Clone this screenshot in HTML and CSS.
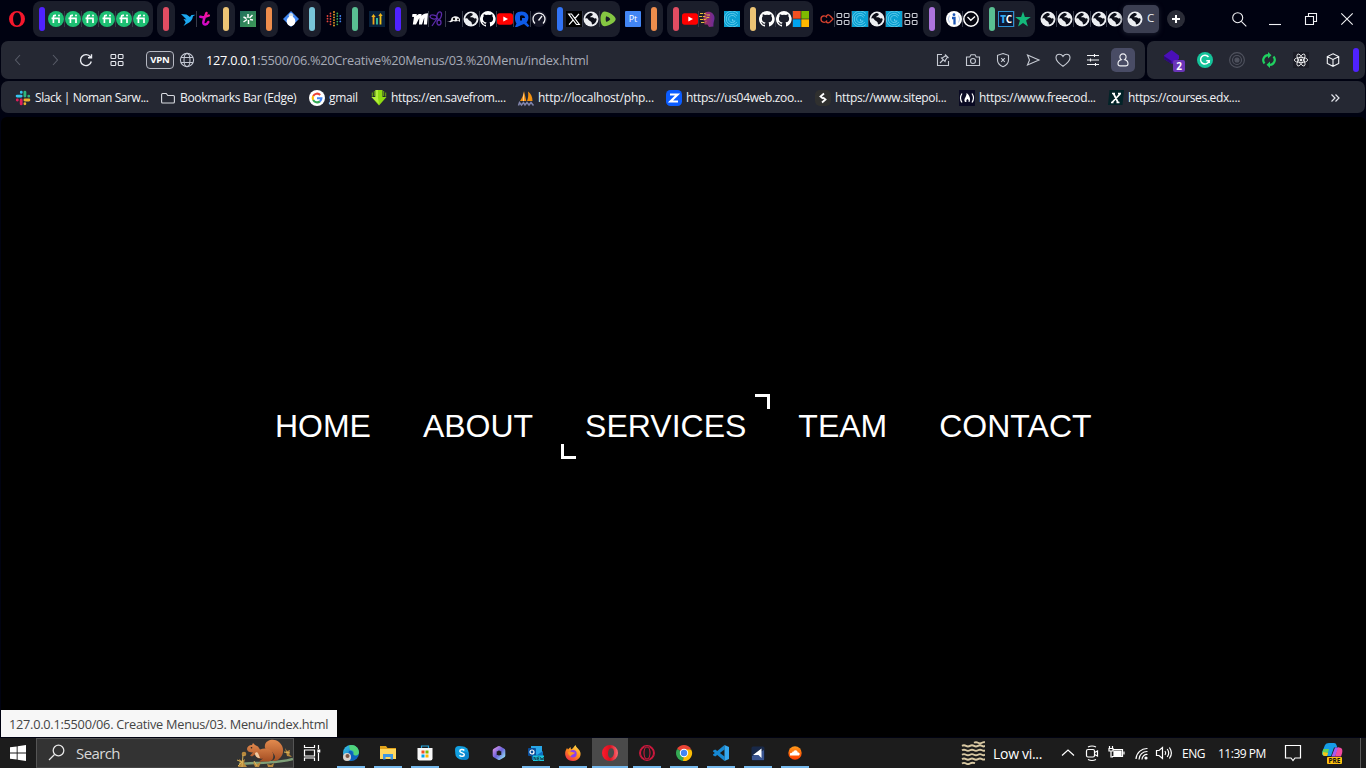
FILE: index.html
```html
<!DOCTYPE html>
<html lang="en">
<head>
<meta charset="utf-8">
<title>Creative Menu</title>
<link rel="stylesheet" href="styles.css">
</head>
<body>
<svg class="defs" width="0" height="0">
  <defs>
    <linearGradient id="gBlue" x1="0" y1="0" x2="1" y2="1"><stop offset="0" stop-color="#36c6e8"/><stop offset="1" stop-color="#0b57b8"/></linearGradient>
    <linearGradient id="gPink" x1="1" y1="0" x2="0" y2="1"><stop offset="0" stop-color="#ff1a8c"/><stop offset="1" stop-color="#c000e0"/></linearGradient>
    <linearGradient id="gFox" x1="0.8" y1="0" x2="0.2" y2="1"><stop offset="0" stop-color="#ffe14a"/><stop offset=".5" stop-color="#ff8a1e"/><stop offset="1" stop-color="#f0284a"/></linearGradient>
    <linearGradient id="gM" x1="0" y1="0" x2="1" y2="1"><stop offset="0" stop-color="#c88be8"/><stop offset=".5" stop-color="#6a62d8"/><stop offset="1" stop-color="#8fd4f4"/></linearGradient>
    <linearGradient id="gSc" x1="0" y1="0" x2="0" y2="1"><stop offset="0" stop-color="#ff9a1a"/><stop offset="1" stop-color="#ff3d00"/></linearGradient>
    <linearGradient id="gSq" x1="0" y1="0" x2="0" y2="1"><stop offset="0" stop-color="#e28a4e"/><stop offset="1" stop-color="#a34d22"/></linearGradient>
    <linearGradient id="gHead" x1="0" y1="0" x2="1" y2="0"><stop offset="0" stop-color="#a8325a"/><stop offset="1" stop-color="#6a2a9a"/></linearGradient>
    <linearGradient id="gSpark" x1="0" y1="0" x2="1" y2="1"><stop offset="0" stop-color="#1f6f5c"/><stop offset="1" stop-color="#3f9a58"/></linearGradient>
    <linearGradient id="gOp" x1="0" y1="0" x2="1" y2="0"><stop offset="0" stop-color="#ff1b2d"/><stop offset=".5" stop-color="#d8101f"/><stop offset="1" stop-color="#ff6a72"/></linearGradient>
    <symbol id="opera" viewBox="0 0 16 16"><path fill="#f5172c" fill-rule="evenodd" d="M8 0a8 8 0 1 0 0 16A8 8 0 0 0 8 0zM8 1.500c2.400 0 3.900 2.900 3.900 6.500S10.400 14.500 8 14.500 4.100 11.600 4.100 8 5.600 1.500 8 1.500z"/></symbol>
    <symbol id="fi" viewBox="0 0 16 16"><circle cx="8" cy="8" r="8" fill="#1dbf73"/><path d="M8 4.300H7c-1.200 0-1.600.600-1.600 1.600V12M3.500 7.300h7.500V12" fill="none" stroke="#fff" stroke-width="1.700"/><circle cx="11" cy="4.500" r="1" fill="#fff"/></symbol>
    <symbol id="bird" viewBox="0 0 16 16"><path fill="#1ca8f0" d="M1 3l5.500.4L10 6l1.500-2 4-.3L13 5.300c-.7 4-2.700 6-6 7.500L3.500 15l2.200-3.700L3.500 8l3 .4z"/></symbol>
    <symbol id="tee" viewBox="0 0 16 16"><path d="M9.500 2C8 5.500 6.300 9 6.300 11.500c0 3 3.700 2.300 5-.5M3.300 5.800C6 6.500 9 6 11.800 4.500" fill="none" stroke="url(#gPink)" stroke-width="2.500" stroke-linecap="round"/></symbol>
    <symbol id="spark" viewBox="0 0 16 16"><path fill="url(#gSpark)" d="M0 0h16v16H0z"/><path d="M8 3v4M3.500 6l3 1.500M3.500 11L7 8.500M8.500 9v4M9.500 7l3-3M10 8.500l3 .5" stroke="#fff" stroke-width="1.500"/></symbol>
    <symbol id="diamond" viewBox="0 0 16 16"><path fill="#3f86f2" d="M8 0l8 8-8 8-8-8z"/><ellipse cx="8" cy="10.300" rx="4.300" ry="4.900" fill="#fff"/><circle cx="8" cy="4.500" r="2.200" fill="#fff"/><path d="M5.500 4h5" stroke="#8ab" stroke-width=".8"/></symbol>
    <symbol id="dots" viewBox="0 0 16 16"><g fill="none" stroke-width="1.800" stroke-linecap="round" stroke-dasharray="0 2.700"><path stroke="#e8453c" d="M1.500 5v8M4.500 2.500v12"/><path stroke="#f5a623" d="M8 1v15"/><path stroke="#34a853" d="M11.300 2.500v12"/><path stroke="#4285f4" d="M14.300 5v8"/></g></symbol>
    <symbol id="arrows" viewBox="0 0 16 16"><path fill="#08213c" d="M0 0h16v16H0z"/><path d="M4.500 5v8.500" stroke="#f0a31a" stroke-width="1.800"/><path d="M8 7v6.500" stroke="#37c6a4" stroke-width="1.800"/><path d="M11.500 4v9.500" stroke="#f0c21a" stroke-width="1.800"/><path fill="#f0b41a" d="M2.300 6l2.200-3 2.200 3zM9.300 5l2.200-3 2.200 3z"/></symbol>
    <symbol id="em" viewBox="0 0 16 16"><path fill="#fff" d="M.5 3h4.300l-.2 1.700C5.500 3.500 6.500 3 8 3h1.500v1.700C10.800 3.300 12.500 2.300 16 2.300L15 13.500h-3.200l.5-7L10 13.500H7L7.300 7 4 13.500H.8L2 6 0 5.800z"/></symbol>
    <symbol id="fly" viewBox="0 0 16 16"><g fill="none" stroke="#5a2aa8" stroke-width="1.300"><ellipse cx="10.300" cy="4.500" rx="2.200" ry="3.800" transform="rotate(15 10 4)"/><ellipse cx="4.500" cy="6" rx="3.500" ry="1.900" transform="rotate(12 4.500 6)"/><ellipse cx="10" cy="11.500" rx="2" ry="2.500"/><path d="M8 7.500l-5 7.500"/></g></symbol>
    <symbol id="masks" viewBox="0 0 16 16"><path d="M1 10c3 1 4 0 4.500-3C8 4 13 5 14 8v3c-2-2.500-4 .5-6.500-1-2 1.500-4.500 1.500-6.500 0z" fill="#f2f2f2"/><circle cx="8" cy="8" r="1.200" fill="#111"/><circle cx="12" cy="8.500" r="1" fill="#111"/></symbol>
    <symbol id="globe" viewBox="0 0 16 16"><circle cx="8" cy="8" r="7.500" fill="#eceef2"/><path fill="#0b0d18" d="M6.500 2.200c1.800-.7 3.500.2 3.200 1.500S7 4.800 7.200 6.300c1.800-.3 4 .2 4.200 1.400.8-.6 1.800-.4 2.300.2-.2 3-2.200 4.900-4.600 5.700-.5-1-.1-2.200-1.100-2.900S5.300 9 4.500 7.500c-.8-.4-1.600-.2-2.200.2.100-2.400 1.800-4.600 4.200-5.500z"/></symbol>
    <symbol id="github" viewBox="0 0 16 16"><path fill="#fff" d="M8 0a8 8 0 0 0-2.530 15.590c.4.070.550-.170.550-.380v-1.490c-2.220.480-2.690-1.070-2.690-1.070-.360-.920-.890-1.170-.890-1.170-.730-.500.050-.490.050-.490.800.060 1.230.830 1.230.830.710 1.220 1.870.870 2.330.660.070-.520.280-.870.510-1.070-1.780-.200-3.640-.890-3.640-3.950 0-.870.310-1.590.820-2.150-.080-.200-.360-1.020.080-2.120 0 0 .670-.210 2.200.820a7.600 7.600 0 0 1 4 0c1.530-1.040 2.200-.820 2.200-.820.440 1.100.160 1.920.080 2.120.510.560.820 1.270.820 2.150 0 3.070-1.870 3.750-3.650 3.950.290.250.540.730.540 1.480v2.190c0 .210.150.460.550.380A8 8 0 0 0 8 0z"/></symbol>
    <symbol id="youtube" viewBox="0 0 16 16"><rect y="2.300" width="16" height="11.400" rx="2.600" fill="#f00"/><path fill="#fff" d="M6.300 5.500v5L11 8z"/></symbol>
    <symbol id="bluep" viewBox="0 0 16 16"><path fill="#0e5be8" fill-rule="evenodd" d="M2 2.500C4-.3 12-.8 14 4c1 3 0 5.500-1.500 7.500L15.500 15l-2 1-3.500-3-2.500 1L3 16H1l1.500-3.500C.5 10 .5 5 2 2.500zM6 5v4.500h4.500l.5-3C10.500 4 7 3.500 6 5z"/><path fill="#0e5be8" d="M8 7h3v3H8z"/></symbol>
    <symbol id="gauge" viewBox="0 0 16 16"><circle cx="8" cy="8" r="8" fill="#141526"/><path d="M4 12.500A6 6 0 1 1 12 12.500M7.500 9.500L11 5" fill="none" stroke="#f2f2f5" stroke-width="1.300"/></symbol>
    <symbol id="ex" viewBox="0 0 16 16"><path d="M0 0h16v16H0z"/><path d="M2.700 3h2.800l7.800 10.500h-2.800zM13 2.800L8.900 7.500M7 9.200l-3.900 4.500" fill="none" stroke="#fff" stroke-width="1.200"/></symbol>
    <symbol id="rumble" viewBox="0 0 16 16"><path fill="#85c742" d="M4.500.6C8 .4 15.500 4.800 15.700 8S8 15.500 4.500 15.300C1.500 15 .5 11 .5 8S1.500.9 4.500.6z"/><path fill="#1b1e2b" d="M6.200 5.200c1.300.3 3.800 1.700 4 2.800s-2.500 2.600-4 2.800c-.7-1.700-.7-3.900 0-5.600z"/></symbol>
    <symbol id="head" viewBox="0 0 16 16"><path fill="url(#gHead)" d="M6 1.500c5-2 9.500 1 9.500 5.500 0 3-1.500 4.500-1 8.500L10 16l-1.500-2.500H5.500V10L4 9z"/><path d="M1 2.500h5l2 1.500h3M0 5.500h6l1.500 1H11M1 8.500h5l2-1M2 11.500h4l1-1" stroke="#e8b93a" stroke-width="1" stroke-dasharray="3 .8" fill="none"/></symbol>
    <symbol id="cee" viewBox="0 0 16 16"><path fill="#0aa0d2" d="M0 0h16v16H0z"/><path d="M14 2.500a8 8 0 1 0 0 11M12.800 5a5.700 5.700 0 1 0 0 6M11.500 6.500a3.600 3.600 0 1 0-.3 3.500H8.500V8" fill="none" stroke="#6fd2f0" stroke-width=".8"/></symbol>
    <symbol id="ms" viewBox="0 0 16 16"><path fill="#f25022" d="M0 0h7.700v7.700H0z"/><path fill="#7fba00" d="M8.300 0H16v7.700H8.300z"/><path fill="#00a4ef" d="M0 8.300h7.700V16H0z"/><path fill="#ffb900" d="M8.300 8.300H16V16H8.300z"/></symbol>
    <symbol id="chain" viewBox="0 0 16 16"><path d="M9 9.500c-2 3-6 2-6-1.500S7 4 9 6.500M8 5.500c2-2.500 3-2 4.500-.3L15 8l-3 3c-1.500 1.300-2.500 1.300-4-.5" fill="none" stroke="#d8432f" stroke-width="1.300"/></symbol>
    <symbol id="grid" viewBox="0 0 16 16"><g fill="none" stroke="currentColor" stroke-width="1.100"><rect x="2" y="2.500" width="4.700" height="4" rx=".8"/><rect x="9.300" y="2.500" width="4.700" height="4" rx=".8"/><rect x="2" y="9.500" width="4.700" height="4" rx=".8"/><rect x="9.300" y="9.500" width="4.700" height="4" rx=".8"/></g></symbol>
    <symbol id="info" viewBox="0 0 16 16"><circle cx="8" cy="8" r="8" fill="#fff"/><circle cx="8" cy="3.700" r="1.400" fill="#1d56b5"/><path d="M6 7h2.500v6.500" stroke="#1d56b5" stroke-width="2.300" fill="none"/><path d="M3.500 4.500a6 6 0 0 0 0 7M12.500 4.500a6 6 0 0 1 0 7" fill="none" stroke="#b5c9ea"/></symbol>
    <symbol id="clock" viewBox="0 0 16 16"><circle cx="8" cy="8" r="7.200" fill="#050610" stroke="#fff" stroke-width="1.500"/><path d="M4.500 6l3.300 3.300L12 5.500" fill="none" stroke="#fff" stroke-width="1.300"/></symbol>
    <symbol id="star" viewBox="0 0 16 16"><path fill="#14b87a" d="M8 .5l1.900 5.600h5.900l-4.700 3.500 1.800 5.800L8 12l-4.900 3.400 1.800-5.800L.2 6.100h5.900z"/></symbol>
    <symbol id="wire" viewBox="0 0 16 16"><g fill="none" stroke="#c3c7d2" stroke-width="1.100"><circle cx="8" cy="8" r="6.600"/><ellipse cx="8" cy="8" rx="3" ry="6.600"/><path d="M2 5.500h12M2 10.500h12"/></g></symbol>
  </defs>
</svg>

<div class="browser">
  <header class="tabs">
    <svg class="ic logo"><use href="#opera"/></svg>
    <div class="group wide"><i class="bar violet"></i><svg class="ic"><use href="#fi"/></svg><svg class="ic"><use href="#fi"/></svg><svg class="ic"><use href="#fi"/></svg><svg class="ic"><use href="#fi"/></svg><svg class="ic"><use href="#fi"/></svg><svg class="ic"><use href="#fi"/></svg></div>
    <div class="group"><i class="bar red"></i></div>
    <div class="loose"><svg class="ic"><use href="#bird"/></svg><svg class="ic"><use href="#tee"/></svg></div>
    <div class="group"><i class="bar yellow"></i></div>
    <div class="loose"><svg class="ic"><use href="#spark"/></svg></div>
    <div class="group"><i class="bar orange"></i></div>
    <div class="loose"><svg class="ic"><use href="#diamond"/></svg></div>
    <div class="group"><i class="bar cyan"></i></div>
    <div class="loose"><svg class="ic"><use href="#dots"/></svg></div>
    <div class="group"><i class="bar green"></i></div>
    <div class="loose"><svg class="ic"><use href="#arrows"/></svg></div>
    <div class="group"><i class="bar violet"></i></div>
    <div class="loose"><svg class="ic"><use href="#em"/></svg><svg class="ic"><use href="#fly"/></svg><svg class="ic"><use href="#masks"/></svg><svg class="ic"><use href="#globe"/></svg><svg class="ic"><use href="#github"/></svg><svg class="ic"><use href="#youtube"/></svg><svg class="ic"><use href="#bluep"/></svg><svg class="ic"><use href="#gauge"/></svg></div>
    <div class="group wide"><i class="bar blue"></i><svg class="ic"><use href="#ex"/></svg><svg class="ic"><use href="#globe"/></svg><svg class="ic"><use href="#rumble"/></svg></div>
    <div class="loose"><span class="fav pt">Pt</span></div>
    <div class="group"><i class="bar orange"></i></div>
    <div class="group wide"><i class="bar red"></i><svg class="ic"><use href="#youtube"/></svg><svg class="ic"><use href="#head"/></svg></div>
    <div class="loose"><svg class="ic"><use href="#cee"/></svg></div>
    <div class="group wide"><i class="bar yellow"></i><svg class="ic"><use href="#github"/></svg><svg class="ic"><use href="#github"/></svg><svg class="ic"><use href="#ms"/></svg></div>
    <div class="loose"><svg class="ic"><use href="#chain"/></svg><svg class="ic"><use href="#grid"/></svg><svg class="ic"><use href="#cee"/></svg><svg class="ic"><use href="#globe"/></svg><svg class="ic"><use href="#cee"/></svg><svg class="ic"><use href="#grid"/></svg></div>
    <div class="group"><i class="bar purple"></i></div>
    <div class="loose"><svg class="ic"><use href="#info"/></svg><svg class="ic"><use href="#clock"/></svg></div>
    <div class="group wide"><i class="bar green"></i><span class="fav tc"><b>T</b>C</span><svg class="ic"><use href="#star"/></svg></div>
    <div class="loose globes"><svg class="ic"><use href="#globe"/></svg><svg class="ic"><use href="#globe"/></svg><svg class="ic"><use href="#globe"/></svg><svg class="ic"><use href="#globe"/></svg><svg class="ic"><use href="#globe"/></svg></div>
    <div class="tab"><svg class="ic"><use href="#globe"/></svg><span>C</span></div>
    <svg class="plus" viewBox="0 0 18 18"><circle cx="9" cy="9" r="9" fill="#2a2c37"/><path d="M9 5v8M5 9h8" stroke="#fff" stroke-width="2"/></svg>
    <div class="window">
      <svg class="ic" viewBox="0 0 16 16"><circle cx="6.700" cy="6.700" r="5" /><path d="M10.300 10.300l5 5"/></svg>
      <svg class="ic" viewBox="0 0 16 16"><path d="M2 13.500h12"/></svg>
      <svg class="ic" viewBox="0 0 16 16"><path d="M5.500 5.500v-3h8v8h-3M2.500 5.500h8v8h-8z"/></svg>
      <svg class="ic" viewBox="0 0 16 16"><path d="M2.300 2.300l11.400 11.400M13.700 2.300L2.300 13.700"/></svg>
    </div>
  </header>

  <div class="bars">
    <div class="address">
      <svg class="ic dim back" viewBox="0 0 16 16"><path d="M10 3L5.500 8l4.500 5"/></svg>
      <svg class="ic dim fwd" viewBox="0 0 16 16"><path d="M6 3l4.500 5L6 13"/></svg>
      <svg class="ic reload" viewBox="0 0 16 16"><path d="M13.300 9.500A5.500 5.500 0 1 1 12.500 5M13.500 2.200v3.500H10"/></svg>
      <svg class="ic speed"><use href="#grid"/></svg>
      <span class="vpn">VPN</span>
      <svg class="ic site"><use href="#wire"/></svg>
      <span class="url"><b>127.0.0.1</b>:5500/06.%20Creative%20Menus/03.%20Menu/index.html</span>
      <div class="actions">
        <svg class="ic" viewBox="0 0 16 16"><path d="M7 2.500H2.500v11h11V9M10 2.500l3.500 3.500M11 3.500L8 5.500l-1.500.5 3.500 3.500.5-1.500 2-3M8 8L5 11"/></svg>
        <svg class="ic" viewBox="0 0 16 16"><path d="M1.500 5h3.300L6 2.800h4L11.200 5h3.300v8.500h-13z"/><circle cx="8" cy="9" r="2.500"/></svg>
        <svg class="ic" viewBox="0 0 16 16"><path d="M8 1.500l5.500 1.800V8c0 3.500-2.500 5.500-5.500 6.700C5 13.500 2.500 11.500 2.500 8V3.300zM6.200 6.200l3.600 3.600M9.800 6.200L6.200 9.800"/></svg>
        <svg class="ic" viewBox="0 0 16 16"><path d="M2.500 3l11.500 5L2.500 13l2-5z"/></svg>
        <svg class="ic" viewBox="0 0 16 16"><path d="M8 14.300C4 11.500 1 8.800 1 5.700 1 3.500 2.600 2.200 4.400 2.200c1.600 0 2.800.9 3.600 2.200.8-1.300 2-2.200 3.600-2.200 1.800 0 3.400 1.300 3.400 3.500 0 3.100-3 5.800-7 8.600z"/></svg>
        <svg class="ic bright" viewBox="0 0 16 16"><path d="M2 3.500h12M2 8h12M2 12.500h12M9.500 2v3M5.500 6.500v3M10.500 11v3"/></svg>
        <span class="profile"><svg class="ic" viewBox="0 0 16 16"><path d="M6.300 7.600a3.100 3.100 0 1 1 3.400 0C12 8.300 13 10 13 11.700c0 1.500-1 2.200-2.200 2.200H5.200C4 13.900 3 13.200 3 11.700c0-1.700 1-3.400 3.300-4.100z"/></svg></span>
      </div>
    </div>
    <div class="extensions">
      <span class="ext cube"><svg viewBox="0 0 20 20"><path fill="#4a0fb8" d="M2 7.500L9.500 2 17 7.500V11l-7 5-8-5z"/><path fill="#2c0a78" d="M2 8l7.500 5v3L2 11z"/></svg><em>2</em></span>
      <svg class="ic" viewBox="0 0 16 16"><circle cx="8" cy="8" r="8" fill="#15c39a" stroke="none"/><path d="M11.500 5A4.400 4.400 0 1 0 12.200 8.800H9.300M12.200 8.800V11" stroke="#fff" stroke-width="1.500"/></svg>
      <svg class="ic" viewBox="0 0 16 16"><g stroke="#50535f"><circle cx="8" cy="8" r="7.400"/><circle cx="8" cy="8" r="4.500"/><circle cx="8" cy="8" r="2" fill="#50535f"/></g></svg>
      <svg class="ic" viewBox="0 0 16 16"><path d="M3.500 11.500A5 5 0 0 1 7 3.200M9 12.800a5 5 0 0 0 3.500-8.300" stroke="#20d060" stroke-width="2.200"/><path d="M7 0v6.500l3.500-3.300zM9 9.500V16l-3.500-3.200z" fill="#20d060" stroke="none"/></svg>
      <svg class="ic react" viewBox="0 0 16 16"><path d="M0 0h16v16H0z" fill="#1c1d27" stroke="none"/><ellipse cx="8" cy="8" rx="6.700" ry="2.600"/><ellipse cx="8" cy="8" rx="6.700" ry="2.600" transform="rotate(60 8 8)"/><ellipse cx="8" cy="8" rx="6.700" ry="2.600" transform="rotate(120 8 8)"/><circle cx="8" cy="8" r="1" fill="#fff"/></svg>
      <svg class="ic bright" viewBox="0 0 16 16"><path d="M8 1.800l5.700 2.700v7L8 14.300l-5.700-2.800v-7zM2.300 4.700L8 7.500l5.700-2.800M8 7.500v6.800"/></svg>
      <i class="bar violet"></i>
    </div>
  </div>

  <nav class="bookmarks">
    <a class="w1"><svg class="ic" viewBox="-.8 -.3 17.600 16.600"><g stroke-width="3.100" stroke-linecap="round"><path stroke="#36c5f0" d="M6 5.900H1.500M6.100 1.700v.2"/><path stroke="#2eb67d" d="M10.100 5.900V1.500M14.300 6v-.1"/><path stroke="#ecb22e" d="M10.100 10.200h4.400M10.100 14.300v-.1"/><path stroke="#e01e5a" d="M6 10.200v4.300M1.700 10.200h.1"/></g></svg><span>Slack | Noman Sarw...</span></a>
    <a class="w2"><svg class="ic" viewBox="0 0 16 16"><path d="M2.500 13q-.9 0-.9-1V4.500q0-1 1-1h3.600l1.600 2h5.600q1 0 1 1V12q0 1-1 1z" fill="none" stroke="#d8dae0" stroke-width="1.100"/></svg><span>Bookmarks Bar (Edge)</span></a>
    <a class="w3"><svg class="ic" viewBox="0 0 16 16"><circle cx="8" cy="8" r="8" fill="#fff"/><g fill="none" stroke-width="2.100"><path stroke="#ea4335" d="M4.200 6A4.400 4.400 0 0 1 11.200 4.900"/><path stroke="#fbbc05" d="M4.200 10A4.400 4.400 0 0 1 4.200 6"/><path stroke="#34a853" d="M4.200 10a4.400 4.400 0 0 0 6.700 1.400"/><path stroke="#4285f4" d="M10.900 11.400A4.400 4.400 0 0 0 12.400 8.200H8"/></g></svg><span>gmail</span></a>
    <a class="w4"><svg class="ic" viewBox="0 0 16 16"><path fill="#8edb12" d="M4.500 0h7v7h4L8 15.500.5 7h4z"/><path fill="#b4ee3c" d="M4.500 0H7v8l1 6L.5 7h4z"/><path d="M1.300 2.500v4M3.300 1v5M12.700 1v5M14.700 2.500v4" stroke="#6fae10" stroke-width="1"/></svg><span>https://en.savefrom....</span></a>
    <a class="w5"><svg class="ic" viewBox="0 0 16 16"><path fill="#f29111" d="M6 1l2.300 10H2C4 8 5.500 5 6 1zM10 1.500c3 2 4.500 5.500 4.500 9.500H9c1.200-3 1.500-6 1-9.500z"/><path fill="#ffc98a" d="M6 2v9H5V6z"/><path d="M.5 15.500l1-3 2 2.500 2-2.500 1.500 2.500 2-2.500 2 2.500 2-2.500 2.500 3" fill="none" stroke="#8084ac" stroke-width="1.500"/></svg><span>http://localhost/php...</span></a>
    <a class="w6"><svg class="ic" viewBox="0 0 16 16"><rect width="16" height="16" rx="4.500" fill="#0b5cff"/><path d="M4 4.500h7.500L4.500 11.500H12" fill="none" stroke="#fff" stroke-width="2.200"/></svg><span>https://us04web.zoo...</span></a>
    <a class="w7"><svg class="ic" viewBox="0 0 16 16"><rect width="16" height="16" rx="5" fill="#30302f"/><path d="M9 3.500L5.500 6.500 8 8.500M8 7.500l2.500 2L7 12.500" fill="none" stroke="#fff" stroke-width="1.800"/></svg><span>https://www.sitepoi...</span></a>
    <a class="w8"><svg class="ic" viewBox="0 0 16 16"><path fill="#0a0a23" d="M0 0h16v16H0z"/><path d="M3 3.500c-2 3-2 6 0 9M13 3.500c2 3 2 6 0 9" fill="none" stroke="#fff" stroke-width="1.200"/><path fill="#fff" d="M7.500 3c3 2 4.500 6 3 9H9.500c.5-1.500 0-2.500-1-3-1 .5-1.500 1.500-1 3H6c-2-3.500 2-5 1.500-9z"/></svg><span>https://www.freecod...</span></a>
    <a class="w9"><svg class="ic" viewBox="0 0 16 16"><path fill="#022328" d="M1.500 0H16l-1.500 15H0z"/><path d="M5.500 3.500l4.500 9M12.500 3.500L4 12.500M4 3.500h3M8.500 12.500h3M10 3.500h3M3 12.500h2.500" fill="none" stroke="#fff" stroke-width="1.700"/></svg><span>https://courses.edx....</span></a>
    <svg class="ic more" viewBox="0 0 16 16"><path d="M4.500 4.500L8 8l-3.500 3.500M8.500 4.500L12 8l-3.500 3.500" fill="none" stroke="#e4e6ec" stroke-width="1.200"/></svg>
  </nav>

  <main class="page">
    <ul class="menu"><li>HOME</li><li>ABOUT</li><li class="current">SERVICES</li><li>TEAM</li><li>CONTACT</li></ul>
  </main>
  <div class="status"><span>127.0.0.1:5500/06. Creative Menus/03. Menu/index.html</span></div>
</div>

<footer class="taskbar">
  <svg class="ic start" viewBox="0 0 16 16"><path fill="#fff" d="M0 2.300l6.700-.9v6.200H0zM7.600 1.200L16 0v7.600H7.600zM0 8.400h6.700v6.200L0 13.700zM7.600 8.400H16V16l-8.400-1.200z"/></svg>
  <div class="search">
    <svg class="glass" viewBox="0 0 18 18"><circle cx="10.500" cy="6.500" r="5.300"/><path d="M6.500 10.500l-5.500 5.500"/></svg>
    <span>Search</span>
    <svg class="squirrel" viewBox="0 0 58 29"><path d="M4 25c18-2 38 0 54-5" fill="none" stroke="#7f9f78" stroke-width="2.500"/><path fill="url(#gSq)" d="M37 22c5-3 3-6 0-9-5-1-8-3-7-7 1-5 9-7 14-3 6 5 5 13 0 17-2 2-5 2-7 2z"/><path fill="url(#gSq)" d="M12 10c0-2 2-4 5-4l1-2 2 2 3 1.500 2 3c5-2 11-1 13 4 1 4 0 7-4 8H24l4-3c-4 1-7-1-8-4l-3 2-2-1 3-3c-3 0-6-1-6-3.500z"/><path fill="#f0c9a0" d="M20 14c0 3 2 5 5 5-1-2-1-4-3-6z"/><circle cx="16.500" cy="8.800" r=".8" fill="#222"/><g fill="#b98a3e"><path d="M4 20l3 2 3-2-1 4 3 4H3l2-4zM18 23l4 2 4-2-2 5h-4zM32 25l4 1 3-2-1 4h-5zM50 9l2 3 3-1-1 4 3 3-5-1z"/><circle cx="9" cy="15" r="2.300"/></g><path d="M2 21l5 2-4 4M19 22l3 5M49 13l6 1M8 16l-1 12" stroke="#d9b45a" fill="none"/></svg>
  </div>
  <svg class="ic taskview" viewBox="0 0 18 18"><path d="M1.500 1v2.500h10V1M1.500 17v-3h10v3M1.500 6h10v6h-10zM15.500 1v4M15.500 9v8" fill="none" stroke="#fff" stroke-width="1.200"/><path fill="#fff" d="M14.300 5.500h3v3h-3z"/></svg>
  <div class="apps">
    <span class="app on"><svg class="ic" viewBox="0 0 16 16"><circle cx="8" cy="8" r="8" fill="url(#gBlue)"/><path fill="#4fd47b" d="M6 .6c5-2 10 2 10 7 0 3-4 4-6 2.500 1.500-2 .5-5-3-5z"/><path fill="#0c62bd" d="M6 6c3-1 4 1 4 3 1 2 4 2 5 1.500C13 15 8 17 4 14z"/><circle cx="4" cy="12" r="4" fill="#d8d2cc"/><circle cx="4.500" cy="11" r="2" fill="#7a5544"/></svg></span>
    <span class="app on"><svg class="ic" viewBox="0 0 16 16"><path fill="#e0a21a" d="M0 1h6l1.500 2H16v3H0z"/><path fill="#ffd75e" d="M0 4h16v10H0z"/><path fill="#3f97e2" d="M3 14.500V9h10v5.500h-2.500V12h-5v2.500z"/></svg></span>
    <span class="app on"><svg class="ic" viewBox="0 0 16 16"><path d="M4.500 4V1h7V4" fill="none" stroke="#28a8e0" stroke-width="1.200"/><path fill="#f8f8f8" d="M.5 3h15v10.500q0 2-2 2h-11q-2 0-2-2z"/><path fill="#f25022" d="M4.500 5.500h3v3h-3z"/><path fill="#7fba00" d="M8.500 5.500h3v3h-3z"/><path fill="#00a4ef" d="M4.500 9.500h3v3h-3z"/><path fill="#ffb900" d="M8.500 9.500h3v3h-3z"/></svg></span>
    <span class="app"><svg class="ic" viewBox="0 0 16 16"><circle cx="8" cy="8" r="6.800" fill="#129fe0"/><circle cx="5" cy="5" r="4" fill="#129fe0"/><circle cx="11" cy="11" r="4" fill="#0a84cc"/><path d="M10.300 5.500C9 3.800 5.700 4.300 5.800 6.200c.2 2 4.500 1.400 4.500 3.500 0 1.900-3.400 2.200-4.800.5" fill="none" stroke="#fff" stroke-width="1.500"/></svg></span>
    <span class="app"><svg class="ic" viewBox="0 0 16 16"><path d="M8 3l4.300 2.500v5L8 13l-4.300-2.500v-5z" fill="none" stroke="url(#gM)" stroke-width="4" stroke-linejoin="round"/></svg></span>
    <span class="app on"><svg class="ic" viewBox="0 0 16 16"><path fill="#28a8ea" d="M3 1h11v9H3z"/><path fill="#0f6cbd" d="M3 6l6 4 6-4v9H4z"/><rect y="3" width="8" height="8" rx="1" fill="#0a4f9c"/><circle cx="4" cy="7" r="2" fill="none" stroke="#fff" stroke-width="1.200"/><path fill="#19c5dc" d="M5 10.500h11V16H5z"/><path d="M6 15v-3l2 3v-3M11.500 12H9.700v3h1.800M9.700 13.500h1.500M12.500 12l.5 3 1-2 1 2 .5-3" fill="none" stroke="#123" stroke-width=".7"/></svg></span>
    <span class="app on"><svg class="ic" viewBox="0 0 16 16"><path fill="url(#gFox)" d="M2 3l1 1.500L5.500 2l.5 2.500C8 4 8.500 2 10.500 0c.5 2.500 2.500 3 4 5.500C17.500 10 14 16 8 16S-1 11 .5 6z"/><circle cx="8" cy="8.700" r="3.700" fill="#8a3ff0"/><path d="M3 7c3-1.500 5 1 7 .5-1 2.500-4 1.500-4 4-2-1-3-2.500-3-4.500z" fill="#ff9a1a"/></svg></span>
    <span class="app on active"><svg class="ic" viewBox="0 0 16 16"><path fill="url(#gOp)" fill-rule="evenodd" d="M8 0a8 8 0 1 0 0 16A8 8 0 0 0 8 0zM9.300 3.200c1.900 0 3 2 2.700 4.900s-1.800 4.800-3.500 4.800-2.700-2-2.500-4.900S7.400 3.200 9.300 3.200z"/></svg></span>
    <span class="app on"><svg class="ic" viewBox="0 0 16 16"><g fill="none" stroke="#d0193f" stroke-width="1.100"><circle cx="8" cy="8" r="7.400"/><ellipse cx="8" cy="8" rx="3" ry="6"/><path d="M5.500 2a6.500 6.500 0 0 0 0 12M10.500 2a6.500 6.500 0 0 1 0 12"/></g></svg></span>
    <span class="app on"><svg class="ic" viewBox="0 0 16 16"><path fill="#ea4335" d="M8 8L1.100 4A8 8 0 0 1 14.900 4z"/><path fill="#34a853" d="M8 8l-1 8A8 8 0 0 1 1.100 4z"/><path fill="#fbbc05" d="M8 8V4.500h7.200A8 8 0 0 1 7 16z"/><circle cx="8" cy="8" r="4.200" fill="#fff"/><circle cx="8" cy="8" r="3.200" fill="#4285f4"/></svg></span>
    <span class="app on"><svg class="ic" viewBox="0 0 16 16"><path fill="#1688d2" d="M11.500 0v4.500L2.200 11.500 0 10.300v-.9z"/><path fill="#1688d2" d="M11.500 16v-4.500L2.200 4.500 0 5.700v.9z"/><path fill="#35a8f0" d="M11.500 0L16 2v12l-4.500 2z"/></svg></span>
    <span class="app on"><svg class="ic" viewBox="0 0 16 16"><rect x="1.500" y="1.500" width="13" height="14" rx="1.500" fill="#182848"/><path fill="#3a5590" d="M2 11l12-6v10H2z"/><path fill="#fff" d="M3 10L11.500 3.500v9.500L8.500 10z"/></svg></span>
    <span class="app on"><svg class="ic" viewBox="0 0 16 16"><circle cx="8" cy="8" r="6.700" fill="url(#gSc)"/><path fill="#fff" d="M3 10.500V8.500l1-.8 1 .3.500-1.500 1 .5V6c2-1.500 4-.5 4.200 1.500 2.300-.3 2.600 2.500 1 3z"/></svg></span>
  </div>
  <div class="tray">
    <svg class="haze" viewBox="0 0 24 24"><g fill="none" stroke="#d9c9a3" stroke-width="1.900"><path d="M13 1.800q2-1.200 4 0t4 0 3-.3M1 4.900q2-1.200 4 0t4 0 4 0 4 0 4 0 3-.3M1 9.300q2-1.200 4 0t4 0 4 0 4 0 4 0 3-.3M1 13.700q2-1.200 4 0t4 0 4 0 4 0 4 0 3-.3M1 18.100q2-1.200 4 0t4 0 4 0 4 0 4 0 3-.3M1 22.500q2-1.200 4 0t4 0 5-.3"/></g></svg>
    <span class="weather">Low vi...</span>
    <svg class="ic up" viewBox="0 0 16 16"><path d="M2 10.500l6-5.500 6 5.500"/></svg>
    <svg class="ic cam" viewBox="0 0 16 16"><rect x="2.500" y="4.500" width="8" height="7.500" rx="1.500"/><path d="M10.500 7.500l3-1.500v5l-3-1.500M4 2q4-2 8 0M4 14.500q4 2 8 0"/></svg>
    <svg class="ic batt" viewBox="0 0 16 16"><path d="M5 4.500h9.500v7H4M16 6.500v3M1.500 1v2M4.500 1v2M1 3.500h4v2.500H1zM3 6v6H5"/><path fill="#fff" d="M6 6h7v4.500H6z"/></svg>
    <svg class="ic wifi" viewBox="0 0 16 16"><path d="M2 14A11 11 0 0 1 13.500 3.500M5 14.500A8 8 0 0 1 13.500 6.500M8 14.500a5 5 0 0 1 5.500-5"/><circle cx="12" cy="13" r="1" fill="#fff"/></svg>
    <svg class="ic vol" viewBox="0 0 16 16"><path d="M.5 5.500H3l3.500-3v11L3 10.500H.5zM9 6q1.500 2 0 4M11.200 4q3 4 0 8M13.400 2.500q4 5.500 0 11"/></svg>
    <span class="lang">ENG</span>
    <span class="time">11:39 PM</span>
    <svg class="note" viewBox="0 0 18 18"><path d="M1.500 1.500h15v12.500H11l-2 2.500-2-2.500H1.500z"/></svg>
    <span class="copilot"><svg viewBox="0 0 21 20"><path fill="#159de8" d="M7 1h5q2 0 2.500 2l.8 2.500H12L9 14H3c-4 0-3-4-2-6l2-5q1-2 4-2z"/><path fill="#63d15a" d="M1.500 7L7 7l-2 7H3C0 14-.5 11 1.500 7z"/><path fill="#f5c71a" d="M1 10l5 1-1 3H3q-2.500 0-2-4z"/><path fill="#a85af0" d="M13 5.500h4l-4 9H9.500z"/><path fill="#f04ba0" d="M16 5.500h1c4 0 3.500 4 3 6l-1 3h-6z"/></svg><em>PRE</em></span>
    <i class="edge"></i>
  </div>
</footer>
</body>
</html>
```
FILE: styles.css
```css
*, *::before, *::after { box-sizing: border-box; }
body {
  margin: 0;
  width: 1366px;
  height: 768px;
  overflow: hidden;
  background: #000211;
  color: #fff;
  font-family: "Open Sans", "Noto Sans", sans-serif;
  font-size: 12px;
}
.defs { position: absolute; }
.ic { width: 16px; height: 16px; flex: none; display: block; overflow: visible; }
.browser { height: 738px; display: flex; flex-direction: column; position: relative; }

/* tab strip */
.tabs { height: 41px; flex: none; display: flex; align-items: flex-start; gap: 4px; padding-left: 9px; color: #c9ccd4; }
.tabs .logo { margin: 11px 4px 0 0; }
.group { width: 18px; height: 36px; margin-top: 1px; padding: 0 6px; display: flex; align-items: center; gap: 1px; background: #1b1e2b; border-radius: 8px; flex: none; }
.group.wide { width: auto; padding-right: 4px; }
.group.wide .bar { margin-right: 2px; }
.bar { width: 6px; height: 24px; border-radius: 3px; flex: none; }
.loose { height: 38px; margin-left: 1px; display: flex; align-items: center; gap: 1px; flex: none; }
.group .ic + .ic, .loose .ic + .ic, .fav + .ic { box-shadow: -1px 0 0 #363a48; }
.violet { background: #4f22ff; }
.red { background: #e14d62; }
.yellow { background: #edc475; }
.orange { background: #ee8d4c; }
.cyan { background: #79c4d8; }
.green { background: #59bf92; }
.blue { background: #3173f5; }
.purple { background: #ac74dd; }
.fav { width: 16px; height: 16px; font-size: 9px; line-height: 16px; text-align: center; }
.pt { background: #4285f4; color: #fff; border-radius: 1px; }
.tc { background: #0c1733; border: 1px solid #2c8ed0; line-height: 14px; font-weight: 700; font-size: 10px; letter-spacing: -.5px; color: #fff; }
.tc b { color: #35a7f0; }
.globes { margin-right: -4px; }
.globes .ic:last-child { margin-left: -1px; }
.tab { width: 36px; height: 28px; margin-top: 5px; padding-left: 4px; display: flex; align-items: center; gap: 4px; background: #3b3e51; border-radius: 5px; flex: none; box-shadow: 0 1px 5px #1d2030; font-size: 11.500px; line-height: 26px; color: #eceef2; }
.tab span { height: 28px; }
.plus { width: 18px; height: 18px; margin: 10px 0 0 4px; flex: none; }
.window { display: flex; gap: 20px; margin: 11px 0 0 42px; }
.window .ic { fill: none; stroke: #f0f1f4; stroke-width: 1.100; }

/* address row */
.bars { height: 40px; flex: none; display: flex; gap: 2px; padding: 0 1px; }
.address, .extensions { height: 38px; background: #252833; border-radius: 7px; display: flex; align-items: center; }
.address { width: 1144px; }
.address > .ic, .actions .ic, .extensions .ic { fill: none; stroke: #c6cad3; stroke-width: 1.100; }
.address .dim { stroke: #585c68; }
.back { margin-left: 9px; }
.fwd { margin-left: 21px; }
.address > .reload { margin-left: 15px; stroke: #e8eaf0; stroke-width: 1.400; }
.address > .speed { margin-left: 15px; color: #e8eaf0; stroke: none; }
.vpn { width: 28px; height: 18px; margin-left: 21px; border: 1.500px solid #b5b8c2; border-radius: 4px; font-weight: 700; font-size: 9.500px; line-height: 16px; text-align: center; letter-spacing: -.2px; background: #30333e; }
.address > .site { margin-left: 5px; stroke: none; }
.url { width: 400px; margin-left: 11px; font-size: 12.750px; letter-spacing: -.27px; color: #a7abb7; white-space: nowrap; }
.url b { color: #fff; font-weight: 400; }
.actions { margin-left: auto; display: flex; align-items: center; gap: 14px; padding-right: 10px; }
.actions .bright, .extensions .bright { stroke: #f2f3f6; }
.profile { width: 24px; height: 24px; margin-left: -4px; border-radius: 5px; background: #494c65; display: grid; place-items: center; }
.actions .profile .ic { stroke: #f0f1f5; }
.extensions { width: 218px; gap: 16px; padding-left: 18px; }
.extensions .react { stroke: #fff; stroke-width: .8; }
.ext { width: 16px; height: 24px; position: relative; }
.cube svg { width: 20px; height: 20px; display: block; margin-left: -3px; }
.ext em { position: absolute; left: 8px; top: 12px; width: 12px; height: 12px; border-radius: 2px; background: #6a35b8; font: 700 10px/12px "Open Sans", sans-serif; text-align: center; }
.extensions .bar { margin-left: -4px; }

/* bookmarks */
.bookmarks { height: 32px; margin: 0 1px; flex: none; background: #252833; border-radius: 7px; display: flex; align-items: center; padding: 1px 0 0 14px; }
.bookmarks a { display: flex; align-items: center; gap: 4px; white-space: nowrap; flex: none; color: #f1f2f5; letter-spacing: -.34px; }
.bookmarks a svg { fill: none; }
.w1 { width: 145px; } .w2 { width: 149px; } .w3 { width: 62px; } .w4 { width: 147px; } .w5 { width: 148px; }
.w6 { width: 149px; } .w7 { width: 144px; } .w8 { width: 149px; } .w9 { width: 219px; }
.bookmarks .w1 { letter-spacing: -.43px; }
.bookmarks .w4, .bookmarks .w9 { letter-spacing: -.37px; }
.bookmarks .w5 { letter-spacing: -.24px; }

/* page */
.page { height: 620px; margin: 4px 0 0 1px; padding-top: 277px; background: #000; border-radius: 6px 6px 0 0; }
.menu { display: flex; justify-content: center; gap: 4px; margin: 0; padding: 0 .600px 0 0; list-style: none; font: 32px/37px "Liberation Sans", Arial, sans-serif; }
.menu li { padding: 14px 24px; position: relative; }
.current::before, .current::after { content: ""; position: absolute; width: 15px; height: 15px; border: 0 solid #fff; }
.current::before { top: 0; right: 0; border-width: 3px 3px 0 0; }
.current::after { left: 0; bottom: 0; border-width: 0 0 3px 3px; }
.status { position: absolute; left: 1px; top: 710px; width: 336px; height: 27px; padding-left: 8px; background: #f7f7f7; color: #444; font-size: 12.750px; letter-spacing: -.26px; line-height: 28px; white-space: nowrap; }

/* taskbar */
.taskbar { height: 30px; display: flex; align-items: center; background: #1c1c1c; }
.start { margin-left: 10px; }
.search { width: 258px; height: 30px; margin-left: 10px; padding-left: 11px; background: #333; border: 1px solid #555; border-bottom-color: #444; display: flex; align-items: center; font-size: 15px; letter-spacing: -.6px; color: #d8d8d8; }
.glass { width: 18px; height: 18px; fill: none; stroke: #e6e6e6; stroke-width: 1.300; margin-right: 10px; }
.squirrel { width: 58px; height: 29px; margin-left: auto; }
.taskview { width: 18px; height: 18px; margin-left: 9px; }
.apps { display: flex; gap: 1px; margin-left: 12px; }
.app { width: 36px; height: 30px; padding: 7px 10px; background: linear-gradient(#76b9ed, #76b9ed) center bottom / 0 2px no-repeat; }
.app.on { background-size: 28px 2px; }
.app.active { background-color: #4a4a4a; background-size: 36px 2px; }
.tray { display: flex; align-items: center; margin-left: 148px; white-space: nowrap; }
.tray > svg { fill: none; stroke: #fff; stroke-width: 1.200; flex: none; }
.haze { width: 24px; height: 24px; }
.weather { width: 51px; margin-left: 8px; font-size: 14px; letter-spacing: -.3px; }
.up { margin-left: 16px; }
.cam { margin-left: 8px; }
.batt { margin-left: 8px; }
.wifi { margin-left: 10px; }
.vol { margin-left: 6px; }
.lang { width: 24px; margin-left: 10px; letter-spacing: -.5px; }
.time { width: 50px; margin-left: 12px; letter-spacing: -.5px; }
.note { width: 18px; height: 18px; margin-left: 16px; }
.copilot { width: 21px; height: 22px; margin-left: 20px; position: relative; }
.copilot svg { width: 21px; height: 20px; display: block; }
.copilot em { position: absolute; left: 5px; bottom: 0; width: 15px; height: 7px; border-radius: 1px; background: #ffc20e; color: #111; font: 700 6.500px/7px "Open Sans", sans-serif; text-align: center; }
.edge { width: 1px; height: 30px; margin-left: 17px; background: #5a5a5a; }
```
